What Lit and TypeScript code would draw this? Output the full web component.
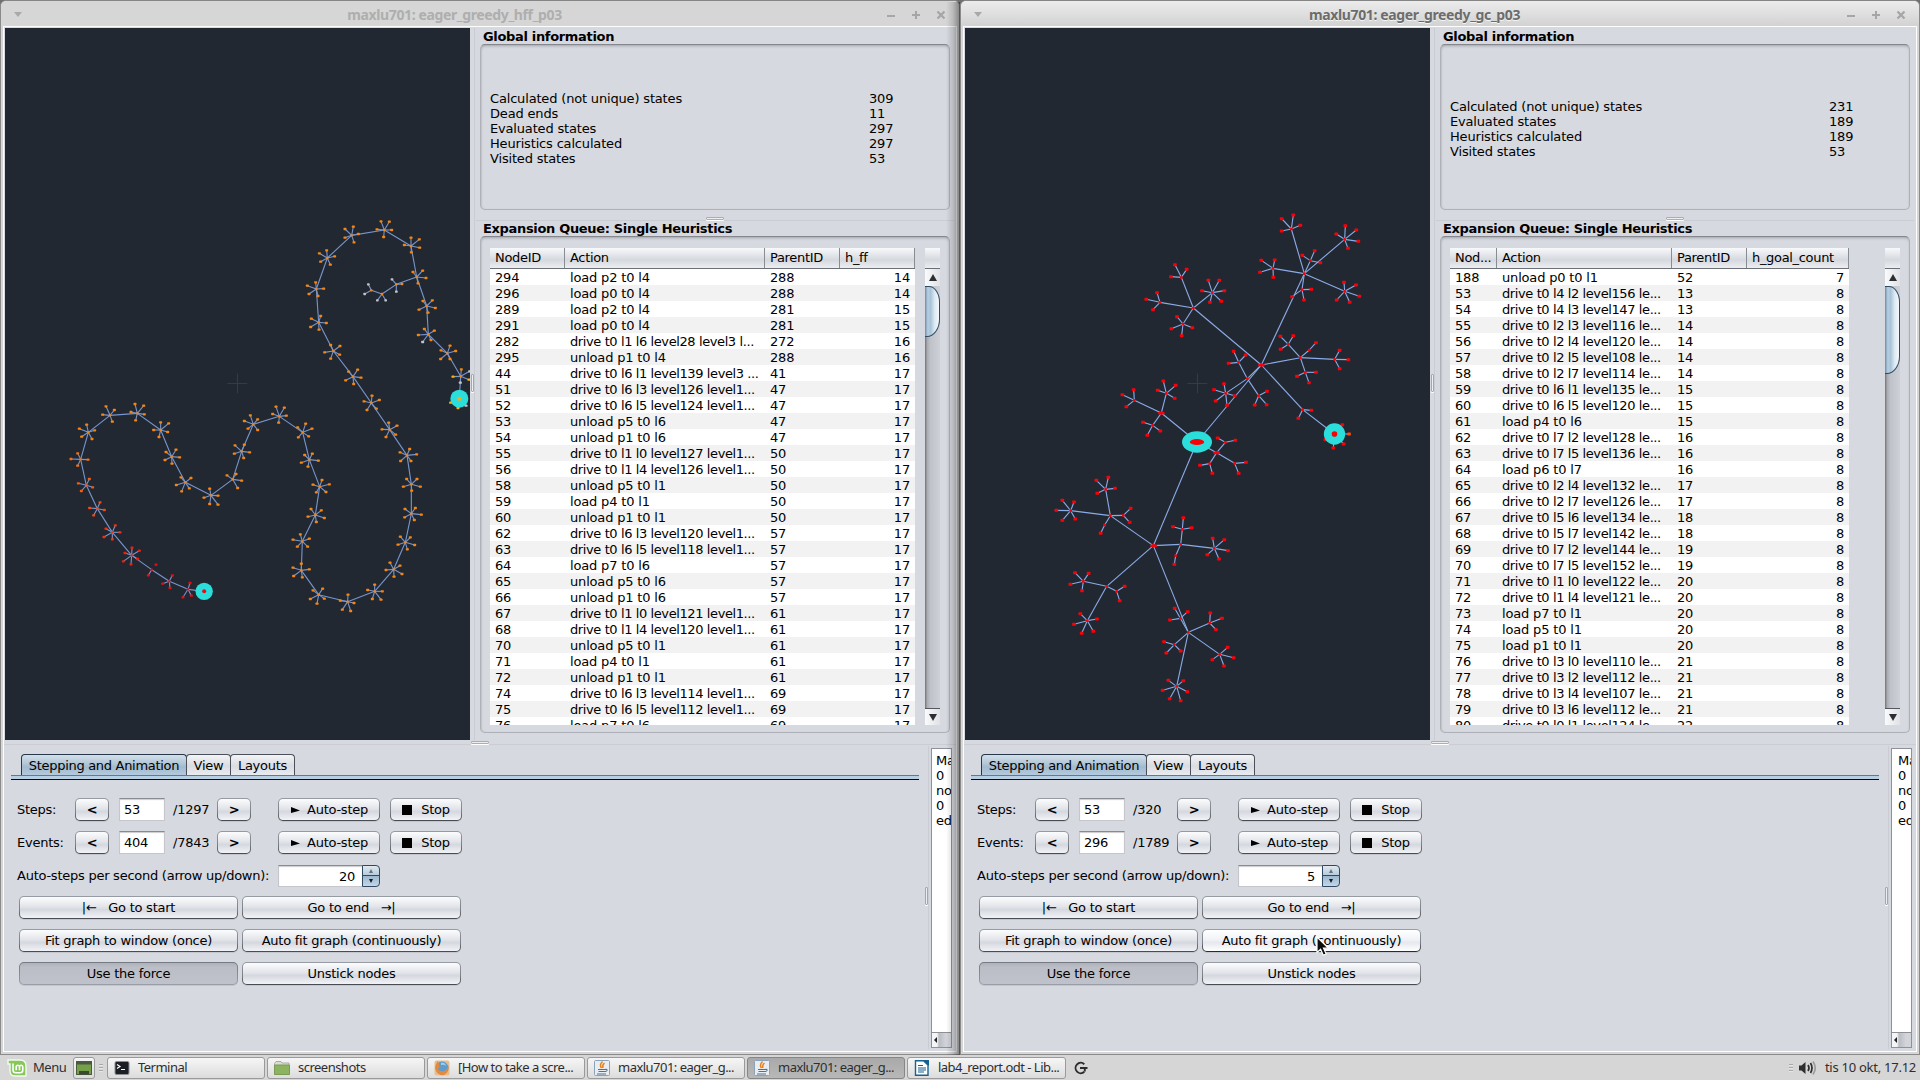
import { LitElement, html, svg, css } from "lit";
import { customElement, property } from "lit/decorators.js";
import { classMap } from "lit/directives/class-map.js";

/* Graph data: one hub per line, "x,y[>parentX,parentY] : leaf leaf ...".
   A leaf may carry a colour suffix: w = dead end, y = yellow, k = deep orange. */
interface Pt { x: number; y: number; c: string }
interface Hub extends Pt { px?: number; py?: number; leaves: Pt[] }

const pt = (s: string): Pt => {
  const m = s.match(/^(\d+),(\d+)([wyk]?)$/)!;
  return { x: +m[1], y: +m[2], c: m[3] };
};
const parse = (src: string, dx = 0, dy = 0): Hub[] =>
  src.trim().split("\n").map((line) => {
    const [head, tail = ""] = line.trim().split(":");
    const [self, parent] = head.trim().split(">");
    const h = pt(self);
    const p = parent ? pt(parent) : undefined;
    return {
      x: h.x + dx, y: h.y + dy, c: h.c,
      px: p ? p.x + dx : undefined, py: p ? p.y + dy : undefined,
      leaves: tail.trim() ? tail.trim().split(/\s+/).map(pt).map((l) => ({ ...l, x: l.x + dx, y: l.y + dy })) : [],
    };
  });

const CHAIN = parse(`
612,1774:
564,1768: 570,1749 549,1792 574,1787
508,1744: 517,1726 488,1751 510,1764
455,1709: 445,1726
395,1666: 396,1643 418,1652 375,1659 413,1677 370,1684 393,1693
337,1597: 346,1576 318,1586 360,1597 312,1611 337,1618
292,1526: 300,1507 269,1524 313,1530 281,1546
259,1456: 268,1437 235,1450 278,1462 244,1473
242,1378: 233,1360 213,1377 264,1379 233,1397
265,1297: 260,1274 238,1286 284,1291 245,1310 276,1317
330,1246: 318,1219 343,1230 308,1244 337,1265
412,1240: 405,1212 431,1217 393,1236 433,1243 407,1261
482,1290: 482,1267 506,1270 461,1290 503,1296 477,1311
515,1370: 528,1349 498,1356 539,1372 495,1380 516,1391
556,1447: 543,1432 573,1434 529,1455 568,1465 545,1474
633,1486: 629,1466 654,1487 612,1493 629,1512 654,1514
698,1438: 681,1426 708,1422 725,1442 713,1464
725,1354: 705,1336 733,1334 749,1357 703,1361 731,1374
760,1273: 751,1246 733,1263 773,1258 744,1286 773,1290
838,1249: 828,1220 853,1223 818,1242 859,1247 836,1268
908,1297: 917,1271 893,1282 936,1286 895,1312 926,1309
928,1379: 914,1365 937,1361 955,1382 904,1388 924,1400
959,1460: 966,1440 939,1454 988,1453 949,1477 978,1476
946,1545: 933,1527 964,1531 924,1550 973,1554 949,1566
907,1624: 901,1603 879,1619 928,1616 892,1640 923,1640
904,1711: 904,1691 879,1703 928,1708 881,1728 907,1732
956,1784: 968,1766 939,1771 973,1796 931,1797 951,1811
1043,1805: 1044,1784 1021,1802 1062,1809 1027,1829 1052,1833
1124,1774: 1124,1754 1103,1770 1147,1774 1117,1797 1143,1799
1181,1708: 1170,1688 1200,1697 1158,1710 1206,1722 1182,1730
1216,1627: 1201,1610 1231,1612 1194,1634 1244,1635 1222,1648
1234,1541: 1246,1524 1215,1527 1264,1544 1214,1552 1243,1560
1234,1453: 1220,1437 1251,1437 1210,1460 1261,1460 1235,1472
1221,1366: 1229,1347 1250,1363 1200,1357 1202,1383 1233,1383
1169,1289: 1166,1268 1191,1277 1146,1288 1187,1304 1158,1311
1114,1209: 1116,1187 1138,1200 1092,1204 1129,1226 1101,1230
1059,1130: 1046,1115 1073,1109 1083,1133 1037,1141 1061,1152
1000,1053: 992,1035 1020,1038 974,1057 1019,1064 992,1076
956,967: 962,948 934,956 979,969 932,981 957,989
949,867: 947,847 922,857 971,866 927,882 954,888
982,774: 980,751 958,760 1004,769 962,785 991,794
1055,706: 1060,680 1035,687 1035,713 1075,702 1062,727
1153,690: 1143,664 1168,665 1131,688 1175,690 1151,711
1233,738: 1233,713 1258,718 1259,743 1213,735 1234,757
1250,831: 1239,816 1268,812 1278,834 1254,850
1280,918: 1269,903 1297,901 1306,924 1257,929 1284,938
1285,1003: 1273,987 1303,992 1255,1005 1268,1026w 1293,1020
1342,1060: 1350,1037 1323,1051 1367,1053 1322,1077 1350,1077
1382,1129: 1384,1108 1359,1130y 1409,1114w 1407,1139y 1381,1148w
1378,1196: 1352,1208y 1374,1224y 1398,1217w`);
CHAIN.forEach((h, i) => { if (i) { h.px = CHAIN[i - 1].x; h.py = CHAIN[i - 1].y; } });

const SPUR = parse(`
1189,853>1250,831: 1176,838w 1189,875w 1206,852
1146,882>1189,853: 1132,901w 1157,901w
1114,871>1146,882: 1105,853w 1094,882w`);

const TREE = [
  ...parse(`
784,495>591,726:
580,324>784,495:
544,232>580,324: 525,194 560,208 513,230
637,278>580,324: 625,241 658,241 606,272 673,272 664,304 630,307
480,307>580,324: 471,278 439,298 459,329
549,372>580,324: 531,350 577,383 514,386 545,407
913,221>784,495:
874,87>913,221: 880,45 845,56 901,76 845,93
1034,118>913,221: 1036,77 1069,90 1009,102 1075,124 1044,145
931,182>913,221: 944,152 907,166 961,188
819,205>913,221: 784,181 824,180 780,217 820,232
1034,274>913,221: 1032,247 1068,255 1078,289 1010,300 1049,307
906,269>913,221: 934,268 876,290 912,300
901,473>784,495:
865,433>901,473: 841,409 880,407 842,448
928,450>901,473: 948,428
1004,478>901,473: 1019,451 1045,479 1019,506
916,517>901,473: 948,517 891,529 927,548
742,536>784,495:
716,487>742,536: 701,454 737,465 686,490
677,580>742,536: 672,551 642,569 704,587 647,603 681,616
776,587>742,536: 801,574 764,615 800,614
908,629>784,495: 934,631 895,655
1003,702>908,629: 1027,674 1047,702k 976,719 1031,732 1000,744
591,726:
484,639>591,726:
403,601>484,639: 401,569 367,584 379,620
499,580>484,639: 490,543 527,556 473,571 524,595
458,676>484,639: 429,667 481,693 442,706
650,758>591,726:
676,727>650,758: 653,714 706,721
704,790>650,758: 738,787 716,820
629,791>650,758: 600,796 637,820`, 120, 600),
  ...parse(`
400,377>531,66:
271,287>400,377:
257,208>271,287: 265,172 229,181 285,205 232,220
152,272>271,287: 127,241 162,246 109,271 127,301 166,297
310,286>271,287: 332,265 329,307
254,315>271,287: 242,340
482,373>400,377:
487,328>482,373: 490,293 459,320 515,323
583,385>482,373: 578,355 613,359 624,392 562,404 597,417
467,407>482,373: 463,433
260,499>400,377:
190,484>260,499: 165,458 206,460 151,493 186,512
290,514>260,499: 314,499 299,542
202,602>260,499: 181,581 231,597 162,613 185,640 220,634
505,637>400,377:
481,595>505,637: 464,565 503,575 450,600
569,609>505,637: 571,579 606,595 588,629
463,674>505,637: 432,665 439,699 482,693
599,703>505,637: 623,682 641,713 577,719 612,738
470,799>505,637: 445,781 490,782 428,811 502,815 449,836 482,842`, 180, 1260),
];

const LEAF_COLORS: Record<string, string> = { w: "#c4c4c4", y: "#ffb000", k: "#ff4a00" };
const leafColor = (p: Pt, base: string) => LEAF_COLORS[p.c] ?? base;
const heat = (i: number) => `rgb(${i < 6 ? 240 : 248},${Math.min(134, i < 3 ? 10 : 10 + (i - 3) * 20)},${i < 3 ? 16 : 14})`;

const drawHubs = (hubs: Hub[], colour: (i: number) => string, edge: string, leafW: number, leafH: number, hubW: number) => svg`
  <g stroke=${edge} stroke-width="3.3" fill="none">
    ${hubs.map((h) => svg`
      ${h.px !== undefined ? svg`<line x1=${h.px} y1=${h.py!} x2=${h.x} y2=${h.y}></line>` : ""}
      ${h.leaves.map((l) => svg`<line x1=${h.x} y1=${h.y} x2=${l.x} y2=${l.y}></line>`)}`)}
  </g>
  ${hubs.map((h, i) => svg`
    <rect x=${h.x - hubW / 2} y=${h.y - hubW / 2} width=${hubW} height=${hubW} rx="2" fill=${colour(i)}></rect>
    ${h.leaves.map((l) => svg`<rect x=${l.x - leafW / 2} y=${l.y - leafH / 2} width=${leafW} height=${leafH} rx="2" fill=${leafColor(l, colour(i))}></rect>`)}`)}`;

const crosshair = svg`<path d="M682 1150.500H742M712.500 1121V1180" stroke="#343b46" stroke-width="3" fill="none"></path>`;

const graphA = svg`
  ${crosshair}
  ${drawHubs(CHAIN, heat, "#7896cd", 9, 7, 7)}
  ${drawHubs(SPUR, () => "#f88610", "#7896cd", 8, 7, 7)}
  <rect x="464" y="1690.500" width="8" height="7" fill="#f00a10"></rect>
  <circle cx="612.500" cy="1774" r="26" fill="#2cdedb"></circle>
  <circle cx="612.500" cy="1774" r="6" fill="#ff0010"></circle>
  <circle cx="1378" cy="1196" r="27" fill="#2cdedb"></circle>
  <ellipse cx="1378" cy="1196.500" rx="7.500" ry="6" fill="#f2ae15"></ellipse>`;

const graphB = svg`
  ${crosshair}
  ${drawHubs(TREE, () => "#fb0008", "#8bace8", 11, 9, 8)}
  ${[[904, 1095], [604, 1239], [770, 1358], [581, 1637]].map(([x, y]) => svg`<ellipse cx=${x} cy=${y} rx="10.500" ry="4.500" fill="#fb0008"></ellipse>`)}
  <ellipse cx="711" cy="1326" rx="45" ry="32" fill="#2cdedb"></ellipse>
  <ellipse cx="711" cy="1326" rx="21.500" ry="9" fill="#f90004"></ellipse>
  <circle cx="1123.500" cy="1302" r="32" fill="#2cdedb"></circle>
  <circle cx="1123.500" cy="1302" r="8.500" fill="#f90004"></circle>`;

const rows = (s: string) => s.trim().split("\n").map((r) => r.trim().split("|"));

interface WinData {
  title: string; active: boolean; graph: unknown; stats: [string, string][];
  cols: string; heads: string[]; rows: string[][]; thumb: number;
  steps: [string, string]; events: [string, string]; rate: string; logPad: number;
}

const WINDOWS: WinData[] = [
  {
    title: "maxlu701: eager_greedy_hff_p03", active: false, graph: graphA,
    stats: [["Calculated (not unique) states", "309"], ["Dead ends", "11"], ["Evaluated states", "297"], ["Heuristics calculated", "297"], ["Visited states", "53"]],
    cols: "75px 200px 75px 75px", heads: ["NodeID", "Action", "ParentID", "h_ff"], thumb: 51,
    rows: rows(`
294|load p2 t0 l4|288|14
296|load p0 t0 l4|288|14
289|load p2 t0 l4|281|15
291|load p0 t0 l4|281|15
282|drive t0 l1 l6 level28 level3 l...|272|16
295|unload p1 t0 l4|288|16
44|drive t0 l6 l1 level139 level3 ...|41|17
51|drive t0 l6 l3 level126 level1...|47|17
52|drive t0 l6 l5 level124 level1...|47|17
53|unload p5 t0 l6|47|17
54|unload p1 t0 l6|47|17
55|drive t0 l1 l0 level127 level1...|50|17
56|drive t0 l1 l4 level126 level1...|50|17
58|unload p5 t0 l1|50|17
59|load p4 t0 l1|50|17
60|unload p1 t0 l1|50|17
62|drive t0 l6 l3 level120 level1...|57|17
63|drive t0 l6 l5 level118 level1...|57|17
64|load p7 t0 l6|57|17
65|unload p5 t0 l6|57|17
66|unload p1 t0 l6|57|17
67|drive t0 l1 l0 level121 level1...|61|17
68|drive t0 l1 l4 level120 level1...|61|17
70|unload p5 t0 l1|61|17
71|load p4 t0 l1|61|17
72|unload p1 t0 l1|61|17
74|drive t0 l6 l3 level114 level1...|69|17
75|drive t0 l6 l5 level112 level1...|69|17
76|load p7 t0 l6|69|17`),
    steps: ["53", "/1297"], events: ["404", "/7843"], rate: "20", logPad: 4,
  },
  {
    title: "maxlu701: eager_greedy_gc_p03", active: true, graph: graphB,
    stats: [["Calculated (not unique) states", "231"], ["Evaluated states", "189"], ["Heuristics calculated", "189"], ["Visited states", "53"]],
    cols: "47px 175px 75px 102px", heads: ["Nod...", "Action", "ParentID", "h_goal_count"], thumb: 88,
    rows: rows(`
188|unload p0 t0 l1|52|7
53|drive t0 l4 l2 level156 le...|13|8
54|drive t0 l4 l3 level147 le...|13|8
55|drive t0 l2 l3 level116 le...|14|8
56|drive t0 l2 l4 level120 le...|14|8
57|drive t0 l2 l5 level108 le...|14|8
58|drive t0 l2 l7 level114 le...|14|8
59|drive t0 l6 l1 level135 le...|15|8
60|drive t0 l6 l5 level120 le...|15|8
61|load p4 t0 l6|15|8
62|drive t0 l7 l2 level128 le...|16|8
63|drive t0 l7 l5 level136 le...|16|8
64|load p6 t0 l7|16|8
65|drive t0 l2 l4 level132 le...|17|8
66|drive t0 l2 l7 level126 le...|17|8
67|drive t0 l5 l6 level134 le...|18|8
68|drive t0 l5 l7 level142 le...|18|8
69|drive t0 l7 l2 level144 le...|19|8
70|drive t0 l7 l5 level152 le...|19|8
71|drive t0 l1 l0 level122 le...|20|8
72|drive t0 l1 l4 level121 le...|20|8
73|load p7 t0 l1|20|8
74|load p5 t0 l1|20|8
75|load p1 t0 l1|20|8
76|drive t0 l3 l0 level110 le...|21|8
77|drive t0 l3 l2 level112 le...|21|8
78|drive t0 l3 l4 level107 le...|21|8
79|drive t0 l3 l6 level112 le...|21|8
80|drive t0 l0 l1 level124 le...|22|8`),
    steps: ["53", "/320"], events: ["296", "/1789"], rate: "5", logPad: 6,
  },
];

@customElement("planner-window")
class PlannerWindow extends LitElement {
  @property({ attribute: false }) data!: WinData;

  static styles = css`
    :host { display: block; width: 960px; height: 1055px; position: relative; }
    * { box-sizing: border-box; }
    .win { width: 960px; height: 1055px; display: flex; flex-direction: column; background: #d6d6d6; border: 1px solid #8a8a8a; border-top: 1px solid #858585; border-radius: 6px 6px 0 0;
      font: 13px/15px "DejaVu Sans", "Liberation Sans", sans-serif; letter-spacing: -0.17px; color: #000; padding: 0 2px 2px 2px; white-space: pre; }
    .title { height: 25px; flex: none; display: flex; align-items: center; margin: 0 -2px; padding: 2px 13px 0 13px; border-radius: 5px 5px 0 0;
      background: #d6d6d6; color: #aeaeae; font: bold 14px/18px "Noto Sans", sans-serif; letter-spacing: -0.37px; }
    .title.active { background: linear-gradient(#ececec, #d2d2d2); color: #6c6c6c; text-shadow: 0 1px 0 #f4f4f4; }
    .title .name { flex: 1; text-align: center; padding-left: 1px; }
    .tri { width: 0; border: 4.500px solid transparent; border-top: 5px solid #a9a9a9; border-bottom: 0; margin-top: -1px; }
    .ctl { display: flex; gap: 15px; color: #a6a6a6; margin-top: 1px; }
    .ctl svg { display: block; width: 10px; height: 10px; }
    .body { flex: 1; display: flex; flex-direction: column; width: 954px; border: 1px solid #fdfdfd; background: #d6d9df; padding: 1px 0 0 1px; min-height: 0; }
    .top { display: flex; height: 712px; flex: none; }
    .canvas { width: 465px; height: 712px; background: #222831; display: block; flex: none; }
    .vdiv { width: 5px; border-right: 1px solid #c9ccd2; display: flex; flex: none; padding-left: 1px; }
    .vgrip { width: 3px; height: 18px; border: 1px solid #a3a7b0; border-radius: 1px; box-shadow: 0 1px 0 #fff; background: #eceef2; align-self: flex-start; margin-top: 346px; }
    .bottom .vdiv { width: 6px; padding-left: 2px; margin-top: 1px; margin-bottom: 2px; }
    .bottom .vgrip { margin-top: 141px; }
    .right { flex: 1; display: flex; flex-direction: column; padding: 0 6px 0 5px; }
    .cap { height: 16px; font-weight: bold; padding: 1px 0 0 3px; letter-spacing: -0.33px; flex: none; line-height: 16px; }
    .box { border: 1px solid #aeb1b7; border-top-color: #85878c; border-radius: 5px; box-shadow: inset 0 2px 3px -1px #a2a4aa, inset 1px 0 2px -1px #a9acb2; flex: none; width: 470px; }
    .info { height: 166px; display: flex; flex-direction: column; justify-content: center; padding: 3px 9px 0; }
    .info div { display: grid; grid-template-columns: 379px 1fr; height: 15px; }
    .hdiv { height: 11px; margin: 0 -4px -1px -4px; border-bottom: 1px solid #c9ccd2; display: flex; justify-content: center; padding-top: 7px; flex: none; }
    .hgrip { width: 18px; height: 3px; border: 1px solid #a9adb6; border-radius: 1px; background: #eceef2; box-shadow: 0 1px 0 #fff; flex: none; }
    .queue { height: 497px; display: flex; justify-content: space-between; padding: 11px 9px 7px; }
    .table { height: 477px; overflow: hidden; }
    .row { display: grid; height: 16px; line-height: 17px; background: #fff; }
    .row:nth-child(odd) { background: #f2f2f2; }
    .row span { padding: 0 5px; }
    .row span.long { letter-spacing: -0.4px; }
    .row span:last-child { text-align: right; }
    .row.head { height: 21px; line-height: 19px; border-bottom: 1px solid #6b7078; background: linear-gradient(#f8f9fb, #dde0e5 45%, #d5d8de 60%, #eceef1); letter-spacing: -0.32px; }
    .row.head span { border-right: 1px solid #888c93; }
    .row.head span:last-child { text-align: left; }
    .bar { width: 15px; height: 477px; display: flex; flex-direction: column; background: linear-gradient(90deg, #707278, #a9acb2 15%, #bfc2c8 35%, #cdd0d6); }
    .stub { height: 21px; border-bottom: 1px solid #6b7078; background: linear-gradient(#f8f9fb, #dde0e5 45%, #d5d8de 60%, #eceef1); }
    .arrow { height: 17px; background: linear-gradient(90deg, #fafbfc, #dfe1e5); display: flex; align-items: center; justify-content: center; }
    .arrow.down { height: 17px; margin-top: auto; border-top: 1px solid #55585e; }
    .up-t { width: 0; border: 4px solid transparent; border-bottom: 7px solid #2c2e33; border-top: 0; }
    .dn-t { width: 0; border: 4px solid transparent; border-top: 7px solid #2c2e33; border-bottom: 0; }
    .thumb { border: 1px solid #2f4a60; border-left: 0; border-radius: 0 11px 13px 0 / 0 16px 18px 0; background: linear-gradient(90deg, #6f8ba5, #b6cfe2 20%, #a9c3d8 40%, #dfeaf3 70%, #f3f8fc); }
    .mid { height: 5px; flex: none; border-bottom: 1px solid #cbcdd2; margin-left: -1px; padding: 1px 0 0 467px; }
    .bottom { flex: 1; display: flex; min-height: 0; }
    .controls { width: 918px; flex: none; padding: 9px 3px 0 6px; letter-spacing: -0.25px; }
    .tabs { display: flex; padding-left: 10px; height: 21px; }
    .tab { height: 21px; line-height: 22px; border: 1px solid #4c5058; border-bottom: 0; border-radius: 4px 4px 0 0; background: linear-gradient(#f3f4f7, #d9dce2 55%, #e9ebef); text-align: center; margin-left: -1px; }
    .t1 { width: 166px; background: linear-gradient(#d3e0ea, #b0c5d6 45%, #a3bacd 60%, #b4cbdf); border-color: #26384a; margin-left: 0; letter-spacing: -0.3px; }
    .t2 { width: 45px; } .t3 { width: 65px; }
    .band { height: 5px; border-top: 1px solid #61788d; border-bottom: 1px solid #000a16; background: #b6cfe3; width: 908px; }
    .line { display: flex; align-items: center; height: 23px; margin-bottom: 10px; padding-left: 6px; }
    .line.first { margin-top: 18px; }
    .line.tight { margin-bottom: 9px; }
    .lab { width: 58px; flex: none; }
    .btn { height: 23px; border: 1px solid transparent; border-radius: 5px; display: flex; align-items: center; justify-content: center; flex: none;
      background: linear-gradient(#fbfcfd, #e3e5ea 45%, #d5d8df 60%, #f2f3f7) padding-box, linear-gradient(#979ba3, #7c8087 60%, #454a52) border-box; box-shadow: 0 1px 0 #c3c6cc; }
    .small { width: 34px; font-weight: bold; }
    .field { width: 46px; height: 23px; background: #fff; border: 1px solid #c4c6cb; border-top: 1px solid #888b91; margin: 0 8px 0 10px; padding: 3px 4px; box-shadow: inset 0 1px 1px #ccc; flex: none; }
    .total { width: 44px; flex: none; }
    .auto { width: 102px; margin-left: 27px; gap: 7px; padding-left: 1px; }
    .stop { width: 72px; margin-left: 10px; gap: 9px; }
    .play { width: 9px; height: 6px; display: block; }
    .sq { width: 10px; height: 10px; background: #000; display: block; margin-top: 1px; }
    .rate { width: 84px; height: 22px; background: #fff; border: 1px solid #c4c6cb; border-top-color: #888b91; border-right: 0; text-align: right; padding: 3px 7px 0 0; box-shadow: inset 0 1px 1px #ccc; }
    .ratelab { width: 261px; flex: none; }
    .spin { width: 18px; height: 22px; border: 1px solid #2f4a62; border-radius: 0 4px 4px 0; background: linear-gradient(#dfe9f1, #b4cadb 46%, #2f4a62 46%, #2f4a62 51%, #9db8ce 51%, #c3d7e7); display: flex; flex-direction: column; align-items: center; justify-content: space-around; }
    .spin i { width: 0; border: 2.500px solid transparent; display: block; }
    .spin .u { border-bottom: 4px solid #6c7178; border-top: 0; }
    .spin .d { border-top: 4px solid #15181c; border-bottom: 0; }
    .wide { padding-left: 8px; gap: 4px; }
    .wide .btn { width: 219px; }
    .btn.pressed { background: linear-gradient(#adb1b9, #bbbec6 20%, #bfc2ca) padding-box, linear-gradient(#757982, #999da5) border-box; }
    .btn.hover { background: linear-gradient(#fff, #f1f3f7 45%, #e5e8ef 60%, #fff) padding-box, linear-gradient(#9a9ea6, #7c8087 60%, #23272e) border-box; }
    .log { width: 21px; height: 300px; margin: 3px 0 0 2px; border: 1px solid #8d90a0; background: #fff; display: flex; flex-direction: column; overflow: hidden; }
    .log .txt { flex: 1; padding-top: 4px; overflow: hidden; }
    .log .sb { height: 15px; border-top: 1px solid #8d9096; display: flex; align-items: center; background: linear-gradient(90deg, #f4f5f7 5px, #b9bcc2 7px, #d2d4d9 14px); }
    .log .sb i { width: 0; border: 3px solid transparent; border-right: 3px solid #222; border-left: 0; margin-left: 2px; }
    .shade { position: absolute; left: 946px; top: 2px; width: 14px; height: 1053px; background: linear-gradient(90deg, #0000, #0002 50%, #0006); }
    .cursor { position: absolute; left: 356px; top: 936px; width: 14px; height: 21px; }
  `;

  private button(label: unknown, cls: Record<string, boolean> = {}) {
    return html`<div class=${classMap({ btn: true, ...cls })}>${label}</div>`;
  }

  private stepRow(label: string, [value, total]: [string, string], first: boolean) {
    return html`<div class=${classMap({ line: true, first })}><span class="lab">${label}</span>${this.button("<", { small: true })}<div class="field">${value}</div><span class="total">${total}</span>${this.button(">", { small: true })}${this.button(html`<svg class="play" viewBox="0 0 9 6"><path d="M0 0L9 3.500L0 6Z"></path></svg><span>Auto-step</span>`, { auto: true })}${this.button(html`<i class="sq"></i><span>Stop</span>`, { stop: true })}</div>`;
  }

  render() {
    const d = this.data;
    const grid = `grid-template-columns:${d.cols}`;
    return html`<div class="win"><div class=${classMap({ title: true, active: d.active })}><i class="tri"></i><span class="name">${d.title}</span><span class="ctl">
      <svg viewBox="0 0 10 10"><path d="M1 6H9" stroke="currentColor" stroke-width="2"></path></svg><svg viewBox="0 0 10 10"><path d="M1 5H9M5 1V9" stroke="currentColor" stroke-width="2"></path></svg><svg viewBox="0 0 10 10"><path d="M1.500 1.500L8.500 8.500M8.500 1.500L1.500 8.500" stroke="currentColor" stroke-width="2.300"></path></svg></span></div>
      <div class="body"><div class="top"><svg class="canvas" viewBox="15 84 1395 2136">${d.graph}</svg><div class="vdiv"><i class="vgrip"></i></div><div class="right"><div class="cap">Global information</div><div class="box info">${d.stats.map(([k, v]) => html`<div><span>${k}</span><span>${v}</span></div>`)}</div><div class="hdiv"><i class="hgrip"></i></div><div class="cap">Expansion Queue: Single Heuristics</div><div class="box queue"><div class="table"><div class="row head" style=${grid}>${d.heads.map((h) => html`<span>${h}</span>`)}</div>${d.rows.map((r) => html`<div class="row" style=${grid}>${r.map((c) => html`<span class=${classMap({ long: c.startsWith("drive") })}>${c}</span>`)}</div>`)}</div><div class="bar"><div class="stub"></div><div class="arrow"><i class="up-t"></i></div><div class="thumb" style="height:${d.thumb}px"></div><div class="arrow down"><i class="dn-t"></i></div></div></div></div></div><div class="mid"><div class="hgrip"></div></div><div class="bottom"><div class="controls"><div class="tabs"><div class="tab t1">Stepping and Animation</div><div class="tab t2">View</div><div class="tab t3">Layouts</div></div><div class="band"></div>${this.stepRow("Steps:", d.steps, true)}${this.stepRow("Events:", d.events, false)}<div class="line tight"><span class="ratelab">Auto-steps per second (arrow up/down):</span><div class="rate">${d.rate}</div><div class="spin"><i class="u"></i><i class="d"></i></div></div><div class="line wide">${this.button("|←   Go to start")}${this.button("Go to end   →|")}</div><div class="line wide">${this.button("Fit graph to window (once)")}${this.button("Auto fit graph (continuously)", { hover: d.active })}</div><div class="line wide">${this.button("Use the force", { pressed: true })}${this.button("Unstick nodes")}</div></div><div class="vdiv"><i class="vgrip"></i></div><div class="log"><div class="txt" style="padding-left:${d.logPad}px">${"Ma\n0\nno\n0\ned"}</div><div class="sb"><i></i></div></div></div></div></div>
      ${d.active ? html`<svg class="cursor" viewBox="0 0 14 21"><path d="M1 1V16.500L4.600 13.200L7.300 19.300L10.200 18L7.500 12.200H12.500Z" fill="#0c0c0c" stroke="#fff" stroke-width="1.200"></path></svg>` : html`<div class="shade"></div>`}`;
  }
}

const icons: Record<string, unknown> = {
  terminal: svg`<rect x="1" y="1.500" width="14" height="13" rx="1.500" fill="#1c1e26" stroke="#8b8d92"></rect><path d="M3 4.500L6 6.500L3 8.500M7 9.500H11" stroke="#fff" stroke-width="1.200" fill="none"></path>`,
  folder: svg`<path d="M0.500 3.500L2 1.500H7L8 3H15V14H1Z" fill="#dcdcd6" stroke="#a9aba3"></path><path d="M0.500 5H15.500V14.500H0.500Z" fill="#8cb35f" stroke="#7a9a55"></path>`,
  firefox: svg`<rect x="0.500" y="0.500" width="15" height="15" rx="2" fill="#e8bd8e"></rect><circle cx="8" cy="8" r="6.500" fill="#5f9bcb"></circle><path d="M4 1Q0 6 2 11Q5 16 10 15Q16 12 14 5Q14 10 10 11Q5 12 4 8L7 7Q4 6 5 4Z" fill="#e58a3c"></path><path d="M7 3Q11 2 12 6Q10 4 7 5Z" fill="#9fd0ee"></path>`,
  java: svg`<rect x="0.500" y="0.500" width="15" height="15" rx="1" fill="#e9edf1" stroke="#8aa3b8"></rect><path d="M8.500 1.500Q5 5 7.500 8M10.500 3Q8 5 9 8" stroke="#e5801f" stroke-width="1.500" fill="none"></path><path d="M4 9.500H11M4.500 11.500H10.500M3 14H12M11 9.500Q13.500 9 13 10.500Q12 11.800 10.500 11.500" stroke="#4d7391" stroke-width="1.100" fill="none"></path>`,
  writer: svg`<path d="M1.500 0.700H9.500L14 5V15.300H1.500Z" fill="#fff" stroke="#15618f" stroke-width="1.400"></path><path d="M9 0H15V6Z" fill="#15618f"></path><path d="M4 5.500H9M4 8H12M4 10H12M4 12H10" stroke="#15618f" stroke-width="1.200"></path>`,
};

const TASKS: [string, string, boolean][] = [
  ["terminal", "Terminal", false],
  ["folder", "screenshots", false],
  ["firefox", "[How to take a scre...", false],
  ["java", "maxlu701: eager_g...", false],
  ["java", "maxlu701: eager_g...", true],
  ["writer", "lab4_report.odt - Lib...", false],
];

@customElement("task-bar")
class TaskBar extends LitElement {
  static styles = css`
    :host { display: block; }
    * { box-sizing: border-box; }
    .bar { height: 25px; display: flex; align-items: center; background: #d6d6d6; font: 13px/18px "Noto Sans", sans-serif; letter-spacing: -0.52px; color: #2e2e2e; padding: 1px 4px 0 7px; white-space: pre; }
    .mint { width: 20px; height: 18px; margin-right: 6px; }
    .menu { width: 40px; margin-bottom: 2px; letter-spacing: -0.45px; }
    .desk, .task { border: 1px solid #9a9a9a; border-radius: 3px; background: linear-gradient(#f6f6f6, #dcdcdc); height: 22px; display: flex; align-items: center; flex: none; }
    .desk { width: 22px; justify-content: center; }
    .desk svg { width: 16px; height: 14px; }
    .grip { width: 4px; height: 8px; margin: 0 4px; background: repeating-linear-gradient(#a9a9a9 0 1px, #e6e6e6 1px 2px, #d6d6d6 2px 3px); }
    .tasks { display: flex; gap: 2px; }
    .task { width: 158px; padding: 0 0 0 6px; gap: 8px; }
    .task:last-child { width: 159px; }
    .task span { margin-bottom: 2px; }
    .task.on { background: linear-gradient(#a9a9a9, #b8b8b8); border-color: #868686; }
    .task svg { width: 16px; height: 16px; flex: none; }
    .g { width: 14px; height: 14px; margin-left: 8px; }
    .tray { margin-left: auto; display: flex; align-items: center; }
    .vol { width: 20px; height: 16px; margin: 0 7px 0 1px; }
    .clock { letter-spacing: -0.260px; margin-bottom: 2px; }
  `;
  render() {
    return html`<div class="bar"><svg class="mint" viewBox="0 0 20 18"><path d="M1 1H13Q19 1 19 7V17H8Q3 17 3 12V5H1Z" fill="#86c95a" stroke="#f2f9ee" stroke-width="1.400"></path><path d="M6 4.500V11Q6 13.800 8.800 13.800H13.200Q15.800 13.800 15.800 11V8Q15.800 6.300 14.200 6.300Q12.500 6.300 12.500 8V11.300M12.500 8Q12.500 6.300 10.900 6.300Q9.200 6.300 9.200 8V11.300" stroke="#fff" stroke-width="1.600" fill="none"></path></svg><span class="menu">Menu</span><span class="desk"><svg viewBox="0 0 16 14"><rect x="0.500" y="0.500" width="15" height="13" fill="#74a04a" stroke="#4b5a3c"></rect><rect x="1" y="1" width="14" height="2.500" fill="#4c5a45"></rect><rect x="3" y="10" width="10" height="3.500" fill="#3b4a30"></rect></svg></span><i class="grip"></i><div class="tasks">${TASKS.map(([i, t, on]) => html`<div class=${classMap({ task: true, on })}><svg viewBox="0 0 16 16">${icons[i]}</svg><span>${t}</span></div>`)}</div><svg class="g" viewBox="0 0 14 14"><path d="M10.300 3.200A5.200 5.200 0 1 0 10.300 10.800" stroke="#2b2b2b" stroke-width="1.900" fill="none"></path><path d="M6 7H13.500M10.800 7V10.500" stroke="#2b2b2b" stroke-width="1.900" fill="none"></path></svg><div class="tray"><i class="grip"></i><svg class="vol" viewBox="0 0 20 16"><path d="M1 5.500H3.500L7.500 2V14L3.500 10.500H1Z" fill="#2f2f2f"></path><path d="M10 5Q12 8 10 11M12.500 3Q15.500 8 12.500 13" stroke="#2f2f2f" stroke-width="1.700" fill="none"></path><path d="M15 1.500Q19.500 8 15 14.500" stroke="#9c9c9c" stroke-width="1.700" fill="none"></path></svg><span class="clock">tis 10 okt, 17.12</span></div></div>`;
  }
}

@customElement("app-root")
class AppRoot extends LitElement {
  static styles = css`
    :host { display: block; width: 1920px; height: 1080px; overflow: hidden; background: #6f6f6f; }
    .wins { display: flex; height: 1055px; }
  `;
  render() {
    return html`<div class="wins">${WINDOWS.map((w) => html`<planner-window .data=${w}></planner-window>`)}</div><task-bar></task-bar>`;
  }
}
